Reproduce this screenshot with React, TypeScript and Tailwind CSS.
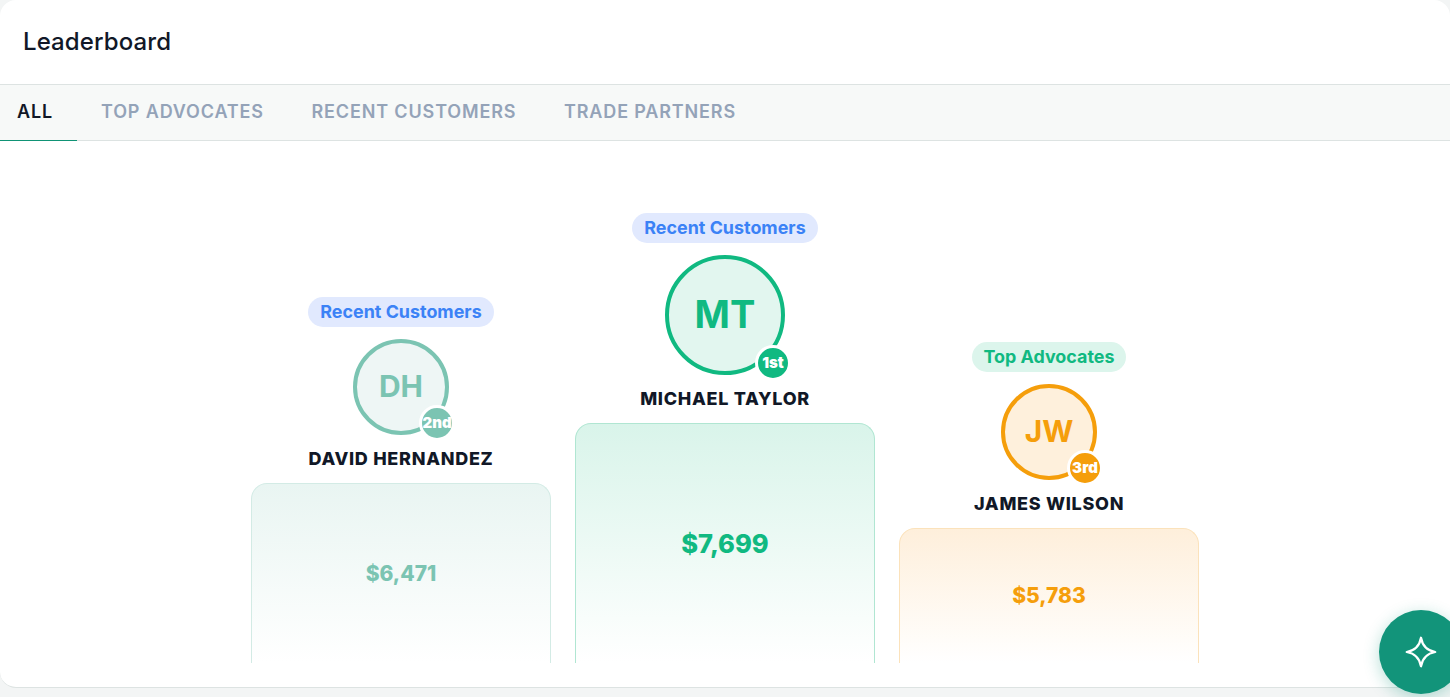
const font = { fontFamily: 'Inter, "Liberation Sans", sans-serif' }

type Leader = {
  name: string
  initials: string
  rank: string
  amount: string
  group: string
  pillClass: string
  avatarClass: string
  badgeClass: string
  barClass: string
  amountClass: string
}

const leaders: Leader[] = [
  {
    name: 'DAVID HERNANDEZ',
    initials: 'DH',
    rank: '2nd',
    amount: '$6,471',
    group: 'Recent Customers',
    pillClass: 'bg-[#e1e9fe] text-[#3b82f6]',
    avatarClass: 'w-24 h-24 text-[30px] border-[#7bc4b2] bg-[#eef6f5] text-[#7bc4b2]',
    badgeClass: 'bg-[#7bc4b2]',
    barClass: 'h-[180px] border-[#d3ebe5] from-[#e9f5f2] to-white',
    amountClass: 'text-[21px] text-[#7bc4b2]',
  },
  {
    name: 'MICHAEL TAYLOR',
    initials: 'MT',
    rank: '1st',
    amount: '$7,699',
    group: 'Recent Customers',
    pillClass: 'bg-[#e1e9fe] text-[#3b82f6]',
    avatarClass: 'w-[120px] h-[120px] text-[38px] border-[#10b981] bg-[#e2f6ef] text-[#10b981]',
    badgeClass: 'bg-[#10b981]',
    barClass: 'h-[240px] border-[#b0e6d2] from-[#d9f4ea] to-white',
    amountClass: 'mt-0.5 text-[25.5px] text-[#10b981]',
  },
  {
    name: 'JAMES WILSON',
    initials: 'JW',
    rank: '3rd',
    amount: '$5,783',
    group: 'Top Advocates',
    pillClass: 'bg-[#dcf5ec] text-[#10b981]',
    avatarClass: 'w-24 h-24 text-[30px] border-[#f59e0b] bg-[#fef0dc] text-[#f59e0b]',
    badgeClass: 'bg-[#f59e0b]',
    barClass: 'h-[135px] border-[#fbe2bb] from-[#feefdb] to-white',
    amountClass: 'text-[21px] text-[#f59e0b]',
  },
]

function PodiumColumn({ leader }: { leader: Leader }) {
  return (
    <div className="flex w-[300px] flex-col items-center">
      <span className={`flex h-[30px] items-center rounded-full px-3 text-[17.9px] font-bold ${leader.pillClass}`}>
        {leader.group}
      </span>
      <div className={`relative mt-3 flex items-center justify-center rounded-full border-4 font-bold ${leader.avatarClass}`}>
        <span className="-mt-px">{leader.initials}</span>
        <span className={`absolute right-[-10px] bottom-[-10px] flex h-9 w-9 items-center justify-center whitespace-nowrap rounded-full border-[3px] border-white text-[15px] font-black text-white ${leader.badgeClass}`}>
          {leader.rank}
        </span>
      </div>
      <div className="mt-[14px] h-5 text-[18px] leading-5 font-extrabold tracking-[0.7px] text-[#111827]">{leader.name}</div>
      <div className={`mt-[14px] flex w-full items-center justify-center rounded-t-2xl border border-b-0 bg-gradient-to-b font-extrabold ${leader.barClass}`}>
        <span className={leader.amountClass}>{leader.amount}</span>
      </div>
    </div>
  )
}

export default function App() {
  return (
    <div className="relative h-[697px] w-[1450px] overflow-hidden bg-[#f3f5f5]" style={font}>
      <div className="h-[688px] overflow-hidden rounded-2xl border-b border-[#dde3e2] bg-white">
        <div className="flex h-[85px] items-center border-b border-[#dde3e2] px-[23px]">
          <h1 className="text-[24px] font-medium tracking-[0.1px] text-[#111827]">Leaderboard</h1>
        </div>
        <div className="flex h-[56px] gap-[47.7px] border-b border-[#dde3e2] bg-[#f7f9f8] text-[18px] font-semibold tracking-[0.85px] text-[#94a3b8]">
          <div className="-mb-px mr-[-23.7px] flex w-[77px] items-center border-b border-[#0f9375] pb-[2px] pl-[17px] text-[#111827]">ALL</div>
          <div className="flex items-center pb-[2px]">TOP ADVOCATES</div>
          <div className="flex items-center pb-[2px]">RECENT CUSTOMERS</div>
          <div className="flex items-center pb-[2px]">TRADE PARTNERS</div>
        </div>
        <div className="flex h-[522px] items-end justify-center gap-6">
          {leaders.map((leader) => (
            <PodiumColumn key={leader.name} leader={leader} />
          ))}
        </div>
      </div>
      <button className="absolute left-[1379px] top-[610px] flex h-[84px] w-[84px] items-center justify-center rounded-full bg-[#12947a] shadow-[0_4px_16px_rgba(18,148,122,0.3)]">
        <svg viewBox="0 0 24 24" className="h-9 w-9" fill="none" stroke="white" strokeWidth={1.5} strokeLinejoin="round">
          <path d="M12 2.5C12.9 7.6 16.4 11.1 21.5 12C16.4 12.9 12.9 16.4 12 21.5C11.1 16.4 7.6 12.9 2.5 12C7.6 11.1 11.1 7.6 12 2.5Z" />
        </svg>
      </button>
    </div>
  )
}
